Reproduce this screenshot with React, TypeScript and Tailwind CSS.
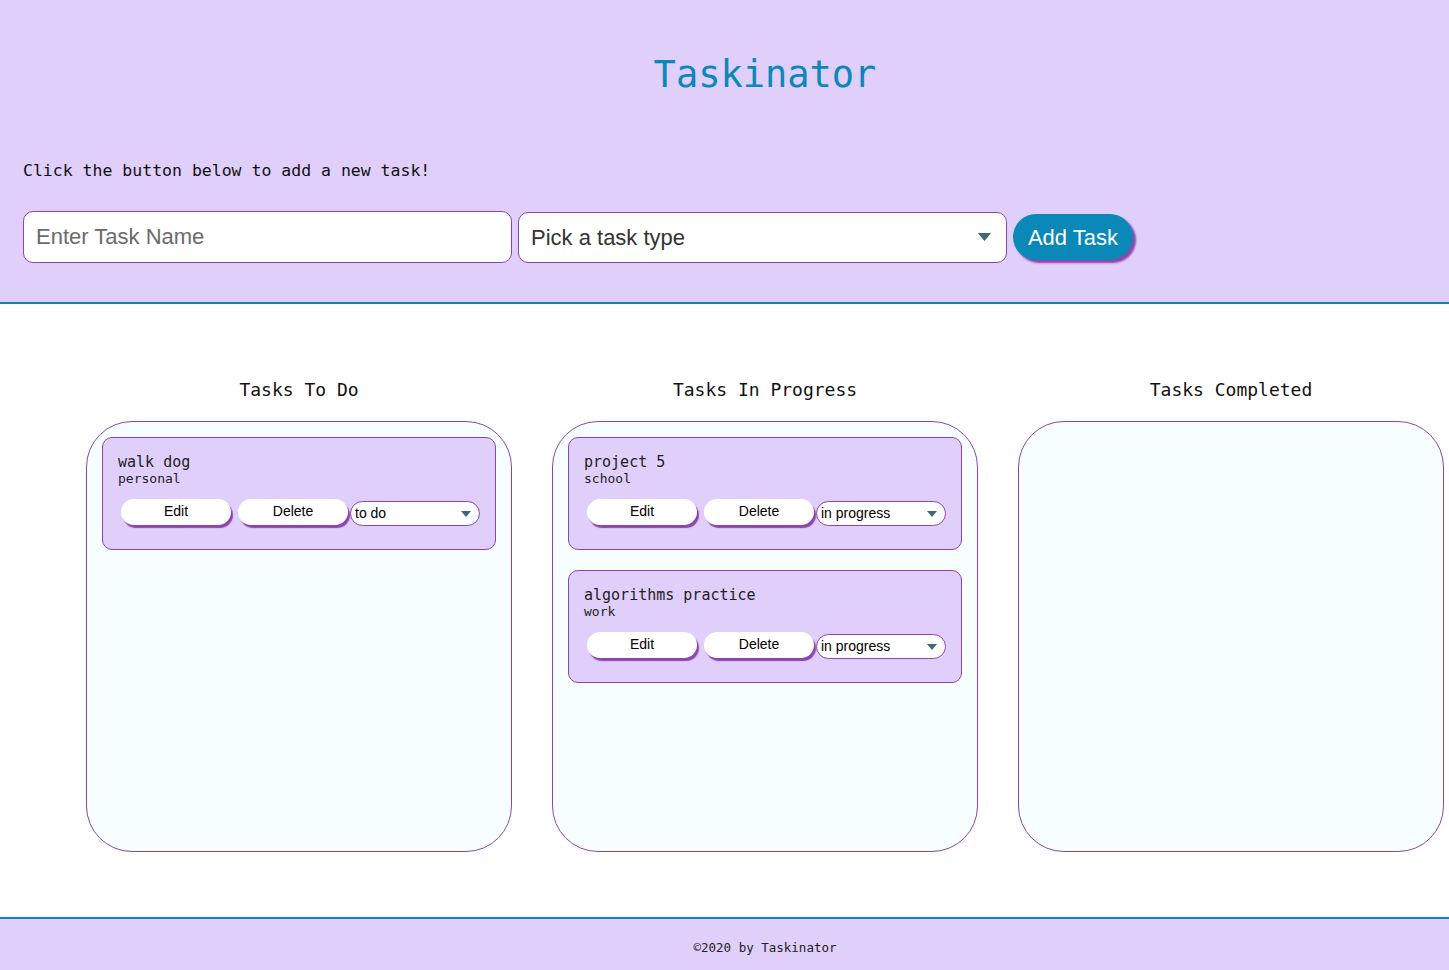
import { ChangeEvent, useState } from "react";

interface Task {
  name: string;
  type: string;
  status: "to do" | "in progress" | "completed";
}

const initialTasks: Task[] = [
  { name: "walk dog", type: "personal", status: "to do" },
  { name: "project 5", type: "school", status: "in progress" },
  { name: "algorithms practice", type: "work", status: "in progress" },
];

const columns = [
  { title: "Tasks To Do", status: "to do" },
  { title: "Tasks In Progress", status: "in progress" },
  { title: "Tasks Completed", status: "completed" },
] as const;

const mono = "font-['DejaVu_Sans_Mono',monospace]";
const arial = "font-['Liberation_Sans',Arial,sans-serif]";

function Caret({ className }: { className: string }) {
  return (
    <svg viewBox="0 0 10 6" className={`pointer-events-none absolute top-1/2 -translate-y-1/2 ${className}`}>
      <path d="M0 0h10L5 6z" fill="#3d6b73" />
    </svg>
  );
}

function TaskCard({ task, onStatus }: { task: Task; onStatus: (s: Task["status"]) => void }) {
  return (
    <div className="rounded-[10px] border border-[#8e44ad] bg-[#e0cefb] px-[15px] pt-[15px] pb-[23px]">
      <h3 className={`${mono} text-[15px] leading-[18px] text-[#222]`}>{task.name}</h3>
      <span className={`${mono} block text-[13px] leading-[16px] text-[#222]`}>{task.type}</span>
      <div className={`${arial} mt-[10px] flex items-center gap-[7px] pl-[3px] text-[14px]`}>
        <button className="h-[26px] w-[110px] rounded-full bg-white text-black shadow-[2px_3px_1px_#8e44ad]">Edit</button>
        <button className="h-[26px] w-[110px] rounded-full bg-white text-black shadow-[2px_3px_1px_#8e44ad]">Delete</button>
        <div className="relative -ml-[5px] mt-[4px]">
          <select
            value={task.status}
            onChange={(e: ChangeEvent<HTMLSelectElement>) => onStatus(e.target.value as Task["status"])}
            className={`${arial} h-[25px] w-[130px] appearance-none rounded-full border border-[#8e44ad] bg-white pl-[4px] text-[14px] text-black outline-none`}
          >
            <option value="to do">to do</option>
            <option value="in progress">in progress</option>
            <option value="completed">completed</option>
          </select>
          <Caret className="right-[9px] h-[6px] w-[10px]" />
        </div>
      </div>
    </div>
  );
}

export default function App() {
  const [tasks, setTasks] = useState<Task[]>(initialTasks);

  return (
    <div className="flex min-h-screen flex-col bg-white">
      <header className="h-[304px] border-b-2 border-[#0a88b8] bg-[#e0cefb] px-[23px]">
        <h1 className={`${mono} pt-[51px] pl-[81px] text-center text-[37px] leading-[48px] text-[#0a88b8]`}>Taskinator</h1>
        <p className={`${mono} mt-[62px] text-[16.5px] leading-[20px] text-[#111]`}>Click the button below to add a new task!</p>
        <form className={`${arial} mt-[30px] flex items-center gap-[6px]`} onSubmit={(e) => e.preventDefault()}>
          <input
            placeholder="Enter Task Name"
            className="h-[52px] w-[489px] rounded-[10px] border border-[#8e44ad] bg-white px-[12px] text-[22px] text-black outline-none placeholder:text-[#6b6b6b]"
          />
          <div className="relative">
            <select
              defaultValue=""
              className="h-[51px] w-[489px] appearance-none rounded-[10px] border border-[#8e44ad] bg-white px-[12px] text-[22px] text-[#333] outline-none"
            >
              <option value="" disabled>Pick a task type</option>
              <option value="work">Work</option>
              <option value="personal">Personal</option>
              <option value="school">School</option>
            </select>
            <Caret className="right-[15px] h-[8px] w-[15px]" />
          </div>
          <button className="h-[46px] w-[120px] rounded-full bg-[#0a88b8] text-[22px] text-white shadow-[3px_3px_2px_#8e44ad]">
            Add Task
          </button>
        </form>
      </header>

      <main className="flex h-[615px] gap-[40px] border-b-2 border-[#0a88b8] pt-[75px] pl-[86px]">
        {columns.map((col) => (
          <section key={col.status} className="flex w-[426px] shrink-0 flex-col">
            <h2 className={`${mono} text-center text-[18px] leading-[22px] text-[#111]`}>{col.title}</h2>
            <div className="mt-[20px] flex h-[431px] flex-col gap-[20px] rounded-[46px] border border-[#8e44ad] bg-[#f7feff] px-[15px] pt-[15px]">
              {tasks.map((t, i) =>
                t.status === col.status ? (
                  <TaskCard
                    key={t.name}
                    task={t}
                    onStatus={(s) => setTasks((prev) => prev.map((p, j) => (j === i ? { ...p, status: s } : p)))}
                  />
                ) : null
              )}
            </div>
          </section>
        ))}
      </main>

      <footer className="flex h-[52px] items-center justify-center bg-[#e0cefb] pt-[6px] pl-[81px]">
        <p className={`${mono} text-[12.5px] text-[#222]`}>©2020 by Taskinator</p>
      </footer>
    </div>
  );
}
